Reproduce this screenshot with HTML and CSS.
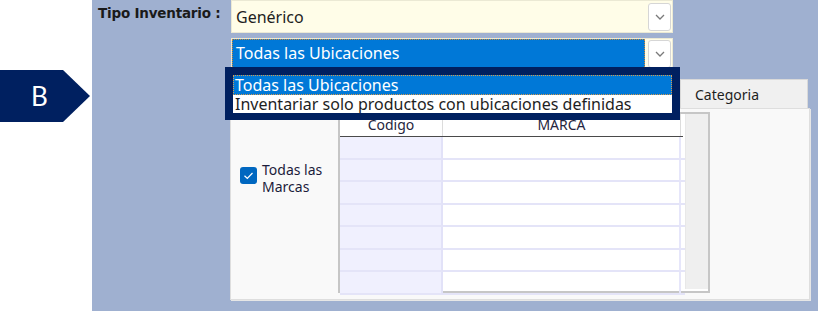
FILE: index.html
```html
<!DOCTYPE html>
<html lang="es">
<head>
  <meta charset="UTF-8" />
  <title>Inventario</title>
  <link rel="stylesheet" href="styles.css">
</head>
<body>
  <div class="gutter">
    <div class="tag">B</div>
  </div>

  <div class="app">
    <div class="filters">
      <div class="field-label">Tipo Inventario :</div>
      <div class="combos">
        <div class="combo">
          <span class="value">Genérico</span>
          <span class="drop-btn">
            <svg width="10" height="6" viewBox="0 0 10 6"><polyline points="1,1 5,5 9,1" fill="none" stroke="#7a7a7a" stroke-width="1.3"/></svg>
          </span>
        </div>
        <div class="combo focused">
          <span class="value">Todas las Ubicaciones</span>
          <span class="drop-btn">
            <svg width="10" height="6" viewBox="0 0 10 6"><polyline points="1,1 5,5 9,1" fill="none" stroke="#7a7a7a" stroke-width="1.3"/></svg>
          </span>
        </div>

        <ul class="droplist">
          <li class="item selected">Todas las Ubicaciones</li>
          <li class="item">Inventariar solo productos con ubicaciones definidas</li>
        </ul>
      </div>
    </div>

    <div class="tabs-panel">
      <div class="tab-strip">
        <div class="tab">Categoria</div>
      </div>
      <div class="tab-body">
        <div class="check-col">
          <label class="check">
            <svg width="17" height="17" viewBox="0 0 17 17"><rect x="0" y="0" width="17" height="17" rx="3" fill="#0067c0"/><polyline points="4.5,8.8 7.3,11.5 12.5,6" fill="none" stroke="#fff" stroke-width="1.2"/></svg>
            <span>Todas las<br>Marcas</span>
          </label>
        </div>

        <div class="grid">
          <div class="table">
            <div class="row head">
              <div class="cell code">Codigo</div>
              <div class="cell name">MARCA</div>
              <div class="cell fill"></div>
            </div>
            <div class="row"><div class="cell code"></div><div class="cell name"></div><div class="cell fill"></div></div>
            <div class="row"><div class="cell code"></div><div class="cell name"></div><div class="cell fill"></div></div>
            <div class="row"><div class="cell code"></div><div class="cell name"></div><div class="cell fill"></div></div>
            <div class="row"><div class="cell code"></div><div class="cell name"></div><div class="cell fill"></div></div>
            <div class="row"><div class="cell code"></div><div class="cell name"></div><div class="cell fill"></div></div>
            <div class="row"><div class="cell code"></div><div class="cell name"></div><div class="cell fill"></div></div>
            <div class="row"><div class="cell code"></div><div class="cell name"></div><div class="cell fill"></div></div>
          </div>
          <div class="vscroll"></div>
        </div>
      </div>
    </div>
  </div>
</body>
</html>
```

FILE: styles.css
```css
* {
  box-sizing: border-box;
}

body {
  margin: 0;
  width: 820px;
  height: 311px;
  overflow: hidden;
  display: flex;
  background-color: #ffffff;
  font-family: 'Noto Sans', sans-serif;
  color: #1e1e1e;
}

.gutter {
  width: 92px;
  flex: none;
  padding-top: 70px;
}

.tag {
  width: 90px;
  height: 52px;
  background-color: #002060;
  clip-path: polygon(0 0, 70% 0, 100% 50%, 70% 100%, 0 100%);
  color: #ffffff;
  font-family: 'Lato', sans-serif;
  font-size: 26px;
  display: flex;
  align-items: center;
  padding-left: 31px;
}

.app {
  width: 726px;
  flex: none;
  background-color: #9fb0d0;
  padding-left: 6px;
}

.filters {
  display: flex;
}

.field-label {
  width: 133px;
  flex: none;
  padding-top: 5px;
  font-family: 'DejaVu Sans', sans-serif;
  font-weight: bold;
  font-size: 13.5px;
  letter-spacing: -0.2px;
  color: #1a1a1a;
}

.combos {
  width: 442px;
  position: relative;
  display: flex;
  flex-direction: column;
  gap: 5px;
}

.combo {
  height: 33px;
  background-color: #fffde8;
  border: 1px solid #ebe9d4;
  display: flex;
  align-items: center;
  padding: 2px 1px 1px 4px;
  font-size: 16px;
}

.combo .value {
  flex: 1;
}

.combo.focused {
  height: 32px;
  align-items: stretch;
  padding: 0 1px 0 0;
}

.combo.focused .value {
  background-color: #0078d7;
  color: #ffffff;
  border: 1px dotted #c8893c;
  margin-right: 3px;
  padding: 2px 0 0 3px;
}

.combo.focused .drop-btn {
  margin-top: 1px;
}

.drop-btn {
  width: 23px;
  height: 28px;
  flex: none;
  background-color: #ffffff;
  border: 1px solid #d6d6d6;
  border-radius: 3px;
  display: flex;
  align-items: center;
  justify-content: center;
}

.droplist {
  position: absolute;
  left: -6px;
  top: 67px;
  width: 455px;
  height: 53px;
  margin: 0;
  padding: 0;
  list-style: none;
  background-color: #ffffff;
  border-style: solid;
  border-color: #002060;
  border-width: 8px 8px 7px 8px;
  overflow: hidden;
  z-index: 2;
}

.droplist .item {
  height: 18px;
  line-height: 18px;
  padding-left: 2px;
  font-size: 16px;
  white-space: nowrap;
}

.droplist .item.selected {
  height: 20px;
  line-height: 20px;
  background-color: #0078d7;
  color: #ffffff;
  outline: 1px dotted #d69a4c;
  outline-offset: -1px;
}

.tabs-panel {
  margin-left: 132px;
  margin-top: 9px;
  width: 580px;
}

.tab-strip {
  height: 29px;
  display: flex;
  justify-content: flex-end;
  padding-right: 2px;
}

.tab {
  width: 128px;
  padding: 5px 0 0 14px;
  font-size: 14px;
  background-color: #f0f0f0;
  border: 1px solid #d9d9d9;
  border-bottom: none;
}

.tab-body {
  height: 192px;
  background-color: #f9f9f9;
  border: 1px solid #dedede;
  box-shadow: 1px 1px 0 #e6e6e6;
  display: flex;
  padding: 3px 0 0 9px;
}

.check-col {
  width: 98px;
  flex: none;
  padding-top: 49px;
}

.check {
  display: flex;
  align-items: flex-start;
  gap: 5px;
  font-size: 14px;
  line-height: 17px;
  color: #1c1c3c;
}

.check svg {
  margin-top: 6px;
  flex: none;
}

.grid {
  width: 372px;
  height: 181px;
  border: 2px solid #c6c6c6;
  display: flex;
  background-color: #ffffff;
}

.table {
  width: 345px;
  flex: none;
}

.row {
  display: flex;
  height: 22.5px;
}

.row.head {
  height: 23px;
  border-bottom: 1px solid #4a4a4a;
  margin-right: 2px;
}

.cell {
  border-bottom: 2px solid #e4e4f8;
}

.cell.code {
  width: 103px;
  background-color: #f0f0fe;
  border-right: 2px solid #e2e2f8;
}

.cell.name {
  width: 238px;
  border-right: 2px solid #e6e6fa;
}

.cell.fill {
  flex: 1;
}

.row.head .cell {
  border-bottom: none;
  background-color: #ffffff;
  text-align: center;
  font-size: 14px;
  line-height: 21px;
  color: #262640;
}

.row.head .cell.code,
.row.head .cell.name {
  border-right: 1px solid #dcdcdc;
}

.vscroll {
  width: 23px;
  margin-bottom: 2px;
  background-color: #efefef;
  border-left: 1px solid #e8e8e8;
}
```
